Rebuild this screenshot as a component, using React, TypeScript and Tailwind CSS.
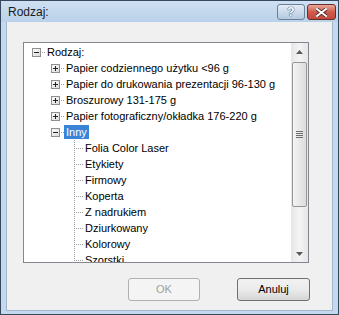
import React from "react";

type Kind = "plus" | "minus" | "leaf";

const indent: Record<number, string> = {
  0: "pl-[8px]",
  1: "pl-[27px]",
  2: "pl-[46px]",
};

function Expander({ open }: { open: boolean }) {
  return (
    <svg width="9" height="16" viewBox="0 0 9 16" shapeRendering="crispEdges">
      <defs>
        <linearGradient id="exp" x1="0" y1="0" x2="1" y2="1">
          <stop offset="0" stopColor="#ffffff" />
          <stop offset="1" stopColor="#d8d8d8" />
        </linearGradient>
      </defs>
      <rect x="0.5" y="4.5" width="8" height="8" fill="url(#exp)" stroke="#8e8f8f" />
      <line x1="2" y1="8.5" x2="7" y2="8.5" stroke="#222" />
      {!open && <line x1="4.5" y1="6" x2="4.5" y2="11" stroke="#222" />}
    </svg>
  );
}

function LeafLine() {
  return (
    <svg width="9" height="16" viewBox="0 0 9 16" shapeRendering="crispEdges">
      <line x1="4.5" y1="0" x2="4.5" y2="16" stroke="#a0a0a0" strokeDasharray="1 1" />
      <line x1="6" y1="8.5" x2="9" y2="8.5" stroke="#a0a0a0" strokeDasharray="1 1" />
    </svg>
  );
}

function Row({
  level,
  kind,
  label,
  selected,
}: {
  level: number;
  kind: Kind;
  label: string;
  selected?: boolean;
}) {
  return (
    <div className={`flex h-[16px] items-center ${indent[level]}`}>
      {kind === "leaf" ? <LeafLine /> : <Expander open={kind === "minus"} />}
      <svg width="4" height="16" viewBox="0 0 4 16" shapeRendering="crispEdges">
        <line x1="1" y1="8.5" x2="4" y2="8.5" stroke="#a0a0a0" strokeDasharray="1 1" />
      </svg>
      <span
        className={`whitespace-nowrap px-[2px] leading-[14px] ${
          selected ? "bg-[#3a84d8] text-white" : "text-black"
        }`}
      >
        {label}
      </span>
    </div>
  );
}

function Arrow({ up }: { up: boolean }) {
  return (
    <div className="flex h-[17px] items-center justify-center">
      <svg width="7" height="4" viewBox="0 0 7 4">
        {up ? (
          <path d="M0 4 L3.5 0 L7 4 Z" fill="#5a5a5a" />
        ) : (
          <path d="M0 0 L3.5 4 L7 0 Z" fill="#5a5a5a" />
        )}
      </svg>
    </div>
  );
}

function Scrollbar() {
  return (
    <div className="flex w-[17px] shrink-0 flex-col bg-gradient-to-r from-[#e6e6e6] via-[#f4f4f4] to-[#e6e6e6]">
      <Arrow up />
      <div className="flex h-[147px] px-[1px] pt-[2px]">
        <div className="flex flex-1 items-center justify-center rounded-[2px] border border-[#969696] bg-gradient-to-r from-[#f4f4f4] to-[#dcdcdc]">
          <div className="flex flex-col gap-[1px]">
            <div className="h-[1px] w-[7px] bg-[#6e6e6e]" />
            <div className="h-[1px] w-[7px] bg-[#6e6e6e]" />
            <div className="h-[1px] w-[7px] bg-[#6e6e6e]" />
            <div className="h-[1px] w-[7px] bg-[#6e6e6e]" />
          </div>
        </div>
      </div>
      <div className="flex-1" />
      <Arrow up={false} />
    </div>
  );
}

export default function App() {
  return (
    <div
      className="flex h-[315px] w-[339px] flex-col border border-[#36485e] bg-[#c4d8ee] text-[11px]"
      style={{ fontFamily: '"Liberation Sans", Arial, sans-serif' }}
    >
      {/* Title bar */}
      <div className="flex h-[21px] shrink-0 items-center justify-between bg-gradient-to-b from-[#cfe0f2] to-[#b9d1ea] pl-[7px] pr-[2px]">
        <span className="text-[12px] text-[#1b1b1b]">Rodzaj:</span>
        <div className="flex gap-[2px] pt-[1px]">
          <div className="flex h-[16px] w-[28px] items-center justify-center rounded-[3px] border border-[#6d7f95] bg-gradient-to-b from-[#e3ecf6] to-[#b4c9e0] text-[12px] font-bold leading-none text-white [text-shadow:0_0_1px_#283850,0_0_1px_#283850]">
            ?
          </div>
          <div className="flex h-[16px] w-[29px] items-center justify-center rounded-[3px] border border-[#6b2c2c] bg-gradient-to-b from-[#e9a899] via-[#cf5a4b] to-[#c44a3a]">
            <svg width="11" height="9" viewBox="0 0 11 9">
              <path
                d="M1 1 L10 8 M10 1 L1 8"
                stroke="#3a1a1a"
                strokeWidth="3.4"
                strokeLinecap="square"
              />
              <path
                d="M1 1 L10 8 M10 1 L1 8"
                stroke="#ffffff"
                strokeWidth="2"
                strokeLinecap="square"
              />
            </svg>
          </div>
        </div>
      </div>

      {/* Client area */}
      <div className="mx-[5px] mb-[3px] flex flex-1 flex-col border-x border-b border-[#a4b7cc] bg-[#f0f0f0]">
        <div className="ml-[16px] mt-[20px] flex h-[221px] w-[286px] overflow-hidden border border-[#828790] bg-white">
          <div className="flex-1 overflow-hidden pt-[1px]">
            <Row level={0} kind="minus" label="Rodzaj:" />
            <Row level={1} kind="plus" label="Papier codziennego użytku <96 g" />
            <Row level={1} kind="plus" label="Papier do drukowania prezentacji 96-130 g" />
            <Row level={1} kind="plus" label="Broszurowy 131-175 g" />
            <Row level={1} kind="plus" label="Papier fotograficzny/okładka 176-220 g" />
            <Row level={1} kind="minus" label="Inny" selected />
            <Row level={2} kind="leaf" label="Folia Color Laser" />
            <Row level={2} kind="leaf" label="Etykiety" />
            <Row level={2} kind="leaf" label="Firmowy" />
            <Row level={2} kind="leaf" label="Koperta" />
            <Row level={2} kind="leaf" label="Z nadrukiem" />
            <Row level={2} kind="leaf" label="Dziurkowany" />
            <Row level={2} kind="leaf" label="Kolorowy" />
            <Row level={2} kind="leaf" label="Szorstki" />
          </div>
          <Scrollbar />
        </div>

        <div className="mt-[15px] flex gap-[37px] pl-[121px]">
          <button className="h-[23px] w-[72px] rounded-[3px] border border-[#adb2b5] bg-[#f4f4f4] text-[11px] text-[#a0a0a0]">
            OK
          </button>
          <button className="h-[23px] w-[73px] rounded-[3px] border border-[#707070] bg-gradient-to-b from-[#f2f2f2] via-[#ebebeb] to-[#d6d6d6] text-[11px] text-black">
            Anuluj
          </button>
        </div>
      </div>
    </div>
  );
}
